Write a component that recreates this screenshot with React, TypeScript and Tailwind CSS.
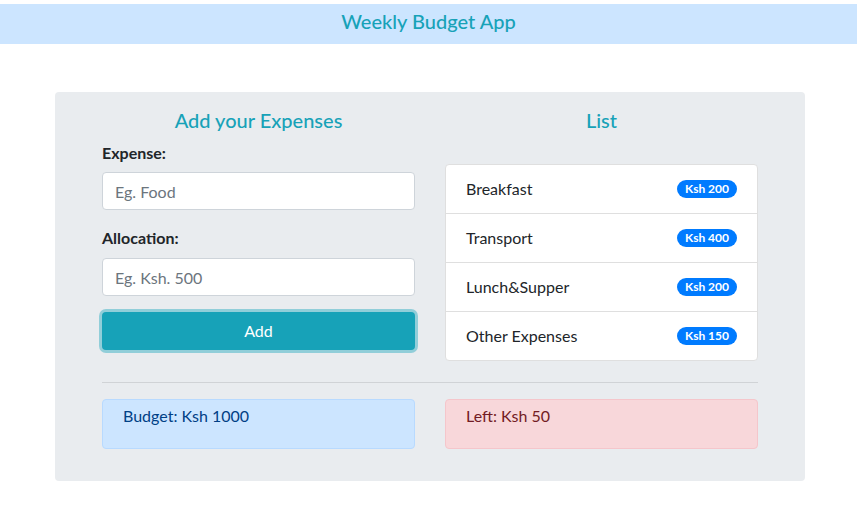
import React from "react";

const items = [
  { name: "Breakfast", amount: "Ksh 200" },
  { name: "Transport", amount: "Ksh 400" },
  { name: "Lunch&Supper", amount: "Ksh 200" },
  { name: "Other Expenses", amount: "Ksh 150" },
];

export default function App() {
  return (
    <div
      className="min-h-[511px] bg-white text-[#212529] text-[16px] leading-6"
      style={{ fontFamily: "Lato, 'Open Sans', sans-serif" }}
    >
      <div className="h-1" />
      <header className="bg-[#cce5ff] h-10 flex items-center justify-center">
        <h1 className="text-[20px] leading-6 font-medium text-[#17a2b8] -mt-[7px]">Weekly Budget App</h1>
      </header>
      <div className="ml-[55px] mt-12 w-[750px] rounded bg-[#e9ecef] px-[47px] pt-[16px] pb-8">
        <div className="grid grid-cols-2 gap-[30px]">
          <div className="flex flex-col">
            <h2 className="text-[20px] leading-6 font-medium text-[#17a2b8] text-center mb-[9px]">Add your Expenses</h2>
            <label className="font-bold leading-6 mb-[7px]">Expense:</label>
            <input
              className="h-[38px] rounded border border-[#ced4da] bg-white px-3 text-[16px] placeholder:text-[#6c757d] outline-none"
              placeholder="Eg. Food"
            />
            <label className="font-bold leading-6 mt-4 mb-[8px]">Allocation:</label>
            <input
              className="h-[38px] rounded border border-[#ced4da] bg-white px-3 text-[16px] placeholder:text-[#6c757d] outline-none"
              placeholder="Eg. Ksh. 500"
            />
            <button className="mt-4 h-[38px] rounded bg-[#17a2b8] text-white text-[16px] shadow-[0_0_0_3px_rgba(58,176,195,0.5)]">
              Add
            </button>
          </div>
          <div className="flex flex-col">
            <h2 className="text-[20px] leading-6 font-medium text-[#17a2b8] text-center">List</h2>
            <ul className="mt-[32px] rounded bg-white border border-[#dfdfdf]">
              {items.map((it, i) => (
                <li
                  key={it.name}
                  className={
                    "flex items-center justify-between px-5 " +
                    (i > 0 ? "h-[49px] border-t border-[#dfdfdf]" : "h-[48px]")
                  }
                >
                  <span>{it.name}</span>
                  <span className="rounded-full bg-[#007bff] text-white text-[12px] font-bold leading-3 px-[8px] py-[3px]">
                    {it.amount}
                  </span>
                </li>
              ))}
            </ul>
          </div>
        </div>
        <hr className="mt-[21px] mb-4 border-0 border-t border-[#d0d3d6]" />
        <div className="grid grid-cols-2 gap-[30px]">
          <div className="h-[50px] rounded border border-[#b8daff] bg-[#cce5ff] text-[#004085] px-5 pt-[4px]">
            Budget: Ksh 1000
          </div>
          <div className="h-[50px] rounded border border-[#f5c6cb] bg-[#f8d7da] text-[#721c24] px-5 pt-[4px]">
            Left: Ksh 50
          </div>
        </div>
      </div>
    </div>
  );
}
